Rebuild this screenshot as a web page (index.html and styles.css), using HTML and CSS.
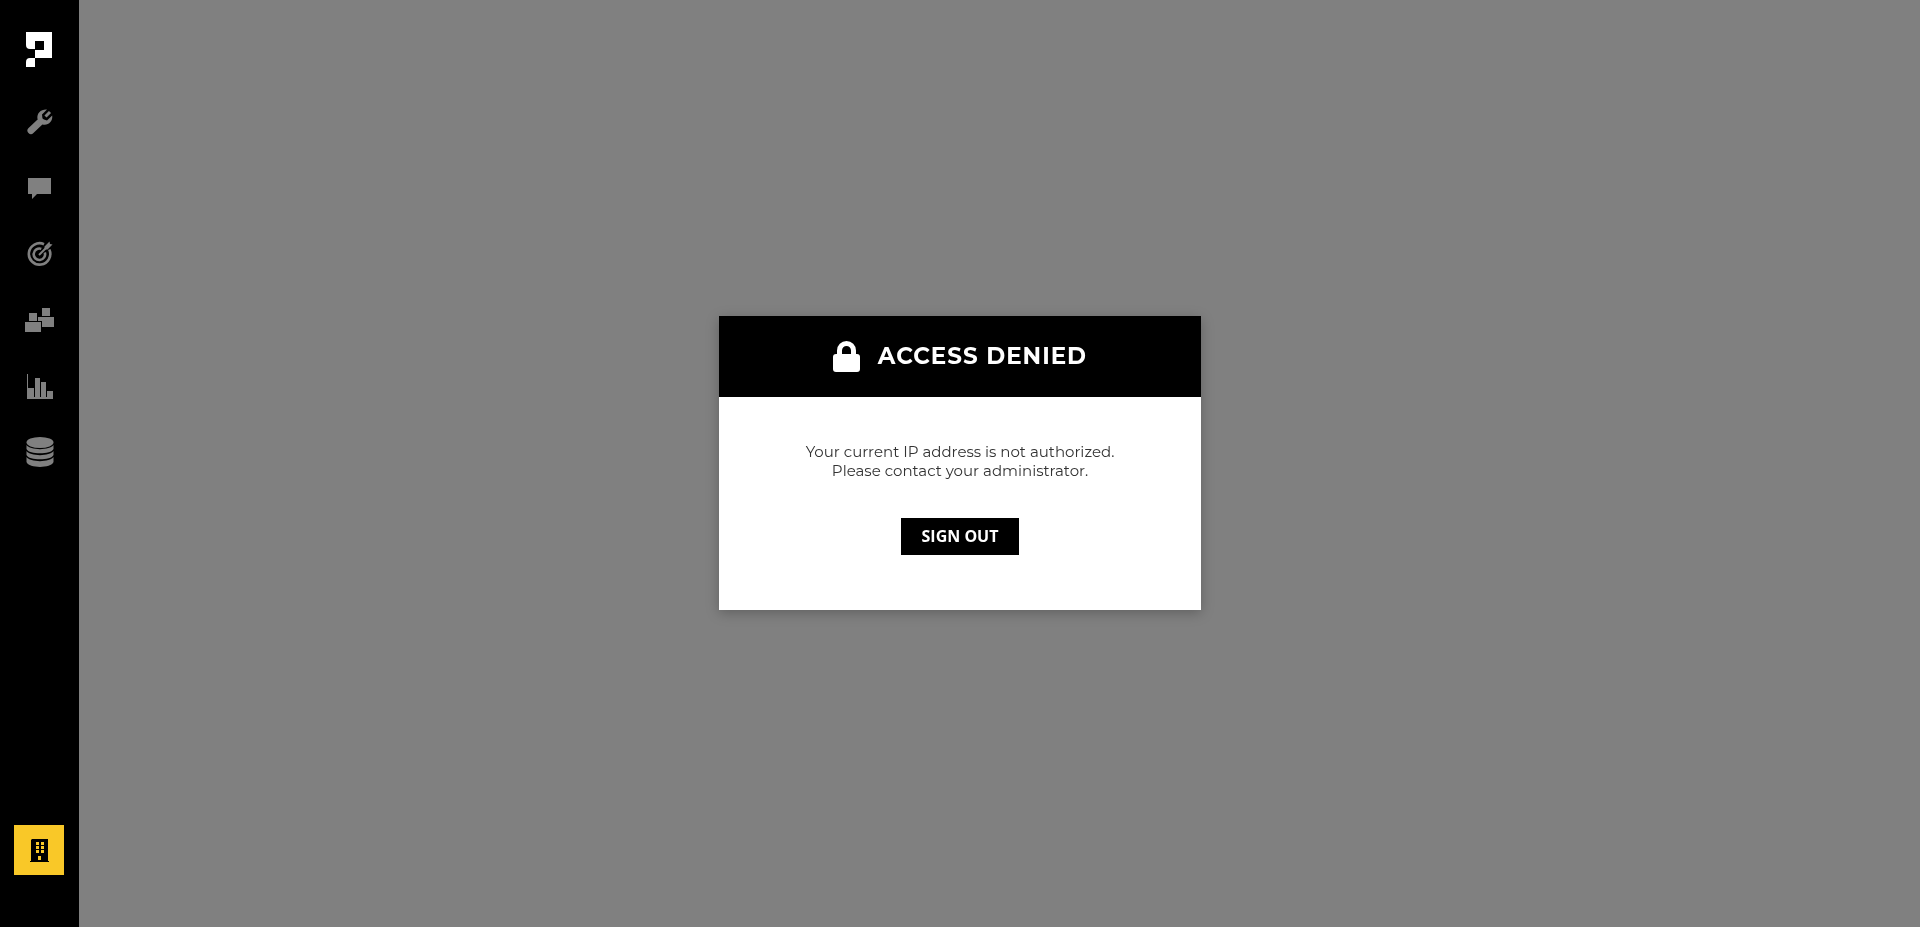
FILE: index.html
```html
<!DOCTYPE html>
<html lang="en">
<head>
    <meta charset="UTF-8">
    <title>Access Denied</title>
    <link rel="stylesheet" href="styles.css">
</head>
<body>
    <nav class="sidebar">
        <a class="logo" href="#" aria-label="Home">
            <svg width="26" height="35" viewBox="0 0 26 35">
                <path fill="#fff" fill-rule="evenodd" d="M0 0h26v26H9v9H0v-5q0-4 4-4h5v-9H4q-4 0-4-4zM9 9v9h9V9z"/>
            </svg>
        </a>
        <a class="nav-item" href="#" aria-label="Tools">
            <svg width="26" height="26" viewBox="0 0 26 26">
                <path fill="none" stroke="currentColor" stroke-width="7" stroke-linecap="round" d="M4 21.5L13.500 12.500"/>
                <path fill="currentColor" d="M20 0.500C14 0 9.500 4 10.500 10L15.500 15.500C21 17 26 12.500 25.200 6.500L20 11.500L15.500 10L15 5.500Z"/>
                <path fill="none" stroke="currentColor" stroke-width="3" d="M18.500 7.500L23 3"/>
            </svg>
        </a>
        <a class="nav-item" href="#" aria-label="Messages">
            <svg width="24" height="24" viewBox="0 0 24 24">
                <path fill="currentColor" d="M0 2h23v16H9l-5 5v-5H0z"/>
            </svg>
        </a>
        <a class="nav-item" href="#" aria-label="Goals">
            <svg width="26" height="26" viewBox="0 0 26 26">
                <g fill="none" stroke="currentColor">
                    <path stroke-width="2.600" d="M17 3.200A10.700 10.700 0 1 0 22.300 8.500"/>
                    <path stroke-width="2.600" d="M14.300 7.900A5.700 5.700 0 1 0 17.800 11.500"/>
                    <path stroke-width="2" d="M12 14L20 6"/>
                </g>
                <path fill="currentColor" d="M17.500 5.500L22.500 0.500L23 3L25.500 3.500L20.500 8.500L17.500 8.500Z"/>
            </svg>
        </a>
        <a class="nav-item" href="#" aria-label="Inventory">
            <svg width="30" height="26" viewBox="0 0 30 26">
                <path fill="currentColor" d="M17 1h8v8h-8zM13 10h16v10H17v-6h-4zM4 6h8v8H4zM0 15h16v10H0z"/>
            </svg>
        </a>
        <a class="nav-item" href="#" aria-label="Reports">
            <svg width="26" height="26" viewBox="0 0 26 26">
                <path fill="currentColor" d="M0 1h1v14h6v9h1V5h5v19h1V9h5v15h1v-6h6v8H0z"/>
            </svg>
        </a>
        <a class="nav-item" href="#" aria-label="Data">
            <svg width="28" height="30" viewBox="0 0 28 30">
                <g fill="currentColor">
                    <ellipse cx="14" cy="5.500" rx="13.500" ry="5.500"/>
                    <path d="M0.500 8C4 13.500 24 13.500 27.500 8V12C25 17.800 3 17.800 0.500 12Z"/>
                    <path d="M0.500 14C4 19.500 24 19.500 27.500 14V18C25 23.800 3 23.800 0.500 18Z"/>
                    <path d="M0.500 20C4 25.500 24 25.500 27.500 20V25C25 31.500 3 31.500 0.500 25Z"/>
                </g>
            </svg>
        </a>
        <a class="company" href="#" aria-label="Company">
            <svg width="20" height="24" viewBox="0 0 20 24">
                <path fill="#000" fill-rule="evenodd" d="M2 1h16v22h1v1H0v-1h1V2zM6 4v3h3V4zM11 4v3h3V4zM6 8v3h3V8zM11 8v3h3V8zM6 12v3h3v-3zM11 12v3h3v-3zM8 18v4h3v-4z"/>
            </svg>
        </a>
    </nav>

    <main class="overlay">
        <div class="modal" role="dialog" aria-labelledby="modal-title">
            <div class="modal-header">
                <svg width="27" height="31" viewBox="0 0 27 31">
                    <path fill="none" stroke="#fff" stroke-width="5" d="M6.500 16V9.500a7 7 0 0 1 14 0V16"/>
                    <rect fill="#fff" y="13" width="27" height="18" rx="3"/>
                </svg>
                <h1 id="modal-title">ACCESS DENIED</h1>
            </div>
            <div class="modal-body">
                <p>Your current IP address is not authorized.<br>Please contact your administrator.</p>
                <button type="button">SIGN OUT</button>
            </div>
        </div>
    </main>
</body>
</html>
```
FILE: styles.css
```css
* {
    box-sizing: border-box;
}

body {
    margin: 0;
    min-height: 100vh;
    display: flex;
    background: #808080;
    font-family: Montserrat, Inter, sans-serif;
}

.sidebar {
    width: 79px;
    min-height: 100vh;
    padding: 32px 1px 52px 0;
    display: flex;
    flex-direction: column;
    align-items: center;
    background: #000;
}

.sidebar svg,
.modal svg {
    display: block;
}

.logo {
    margin-bottom: 22px;
}

.nav-item {
    width: 100%;
    height: 66px;
    padding-left: 2px;
    display: flex;
    align-items: center;
    justify-content: center;
    color: #808080;
}

.company {
    width: 50px;
    height: 50px;
    margin-top: auto;
    padding-left: 2px;
    display: flex;
    align-items: center;
    justify-content: center;
    background: #f9c828;
}

/* covers the whole window, sidebar included */
.overlay {
    position: fixed;
    inset: 0;
    padding-bottom: 1px;
    display: flex;
    align-items: center;
    justify-content: center;
    pointer-events: none;
}

.modal {
    width: 482px;
    background: #fff;
    box-shadow: 0 3px 12px rgba(0, 0, 0, 0.25);
    text-align: center;
    pointer-events: auto;
}

.modal-header {
    padding: 25px 20px;
    display: flex;
    align-items: center;
    justify-content: center;
    gap: 18px;
    background: #000;
    color: #fff;
}

.modal-header h1 {
    margin: 0;
    font-size: 23px;
    line-height: 31px;
    font-weight: 700;
    letter-spacing: 1px;
}

.modal-body {
    padding: 45px 20px 55px;
}

.modal-body p {
    margin: 0 0 38px;
    font-size: 15px;
    line-height: 19px;
    font-weight: 400;
    color: #333;
}

.modal-body button {
    display: block;
    margin: 0 auto;
    padding: 8px 21px;
    border: none;
    background: #000;
    color: #fff;
    font-family: "Open Sans", "Noto Sans", sans-serif;
    font-size: 16px;
    line-height: 21px;
    font-weight: 700;
    cursor: pointer;
}
```
